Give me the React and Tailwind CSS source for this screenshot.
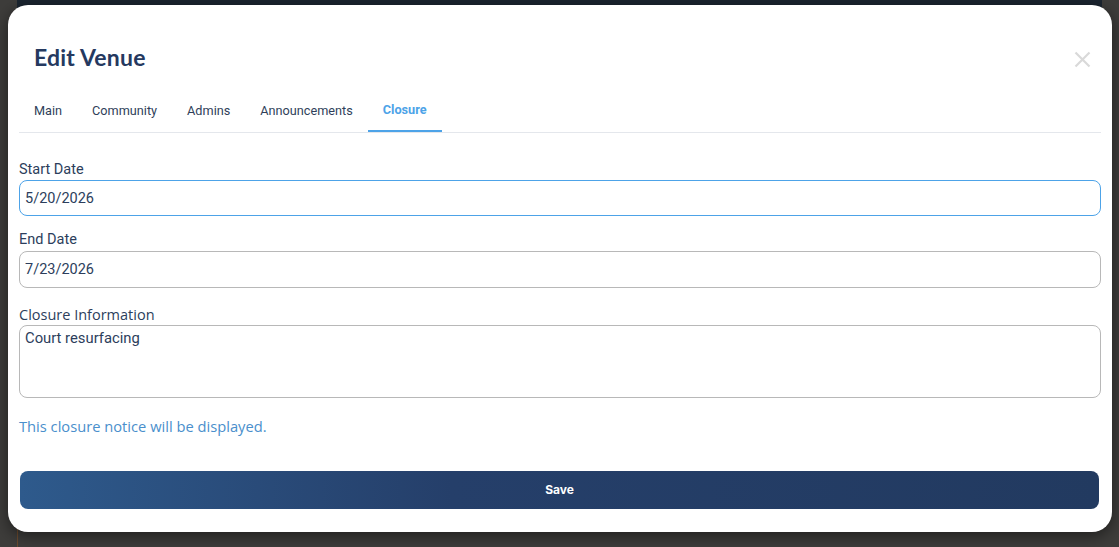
import React, { useState } from 'react';

function App() {
  const [closure, setClosure] = useState({
    startDate: '5/20/2026',
    endDate: '7/23/2026',
    info: 'Court resurfacing',
  });

  const tabs = ['Main', 'Community', 'Admins', 'Announcements', 'Closure'];
  const activeTab = 'Closure';

  const handleChange = (e) => {
    const { name, value } = e.target;
    setClosure((prev) => ({ ...prev, [name]: value }));
  };

  return (
    <div className="h-[547px] w-full overflow-hidden bg-[#3e3d3b] relative">
      {/* page behind the overlay */}
      <div className="absolute left-[17px] top-0 w-[1085px] h-[20px] bg-[#1b2530]" />
      <div className="absolute left-[17px] top-[520px] bottom-0 w-px bg-[#6b4a2e]" />

      <div className="relative ml-[8px] mt-[5px] w-[1104px] h-[527px] bg-white rounded-[20px] shadow-[0_4px_16px_rgba(0,0,0,0.5)] px-[11px] font-['Roboto',sans-serif]">
        {/* Header */}
        <div className="flex items-center justify-between h-[85px] pt-[19px] pl-[15px] pr-[10px]">
          <h2 className="text-[23px] font-bold text-[#25395f] font-['Lato',sans-serif] tracking-[0.2px]">
            Edit Venue
          </h2>
          <svg width="17" height="17" viewBox="0 0 17 17" className="mt-[4px]">
            <path d="M1.5 1.5 L15.5 15.5 M15.5 1.5 L1.5 15.5" stroke="#d9d9d9" strokeWidth="2.2" />
          </svg>
        </div>

        {/* Tabs */}
        <div className="flex border-b border-[#e4e7ec] w-[1082px]">
          {tabs.map((tab) => (
            <div
              key={tab}
              className={
                tab === activeTab
                  ? 'px-[15px] h-[42px] flex items-center text-[12.7px] font-bold text-[#4da3e8] border-b-2 border-[#4da3e8] -mb-px'
                  : 'px-[15px] h-[42px] flex items-center text-[12.7px] text-[#2f3f5a]'
              }
            >
              {tab}
            </div>
          ))}
        </div>

        {/* Form */}
        <form className="w-[1082px] pt-[27px]" onSubmit={(e) => e.preventDefault()}>
          <label className="block text-[14.5px] leading-[20px] text-[#2c3e5c]">Start Date</label>
          <input
            type="text"
            name="startDate"
            value={closure.startDate}
            onChange={handleChange}
            className="block w-full h-[36px] px-[5px] border border-[#4da3e8] rounded-[8px] text-[14.5px] text-[#2c3e5c] outline-none"
          />

          <label className="block mt-[14px] text-[14.5px] leading-[20px] text-[#2c3e5c]">End Date</label>
          <input
            type="text"
            name="endDate"
            value={closure.endDate}
            onChange={handleChange}
            className="block w-full h-[37px] mt-px px-[5px] border border-[#b8b8b8] rounded-[8px] text-[14.5px] text-[#2c3e5c] outline-none"
          />

          <label className="block mt-[17px] text-[14.5px] leading-[20px] text-[#2c3e5c] font-['Open_Sans',sans-serif]">
            Closure Information
          </label>
          <textarea
            name="info"
            value={closure.info}
            onChange={handleChange}
            className="block w-full h-[73px] px-[5px] py-[1px] border border-[#b8b8b8] rounded-[8px] text-[14.8px] text-[#2c3e5c] outline-none resize-none"
          />

          <p className="mt-[18px] text-[14.7px] leading-[20px] text-[#4a8fcc] font-['Open_Sans',sans-serif]">
            This closure notice will be displayed.
          </p>

          <button
            type="submit"
            className="mt-[35px] ml-px w-[1079px] h-[38px] rounded-[8px] bg-gradient-to-r from-[#2e5a8c] via-[#253f6a] via-40% to-[#223a60] text-white text-[12px] font-bold font-['Inter',sans-serif]"
          >
            Save
          </button>
        </form>
      </div>
    </div>
  );
}

export default App;
